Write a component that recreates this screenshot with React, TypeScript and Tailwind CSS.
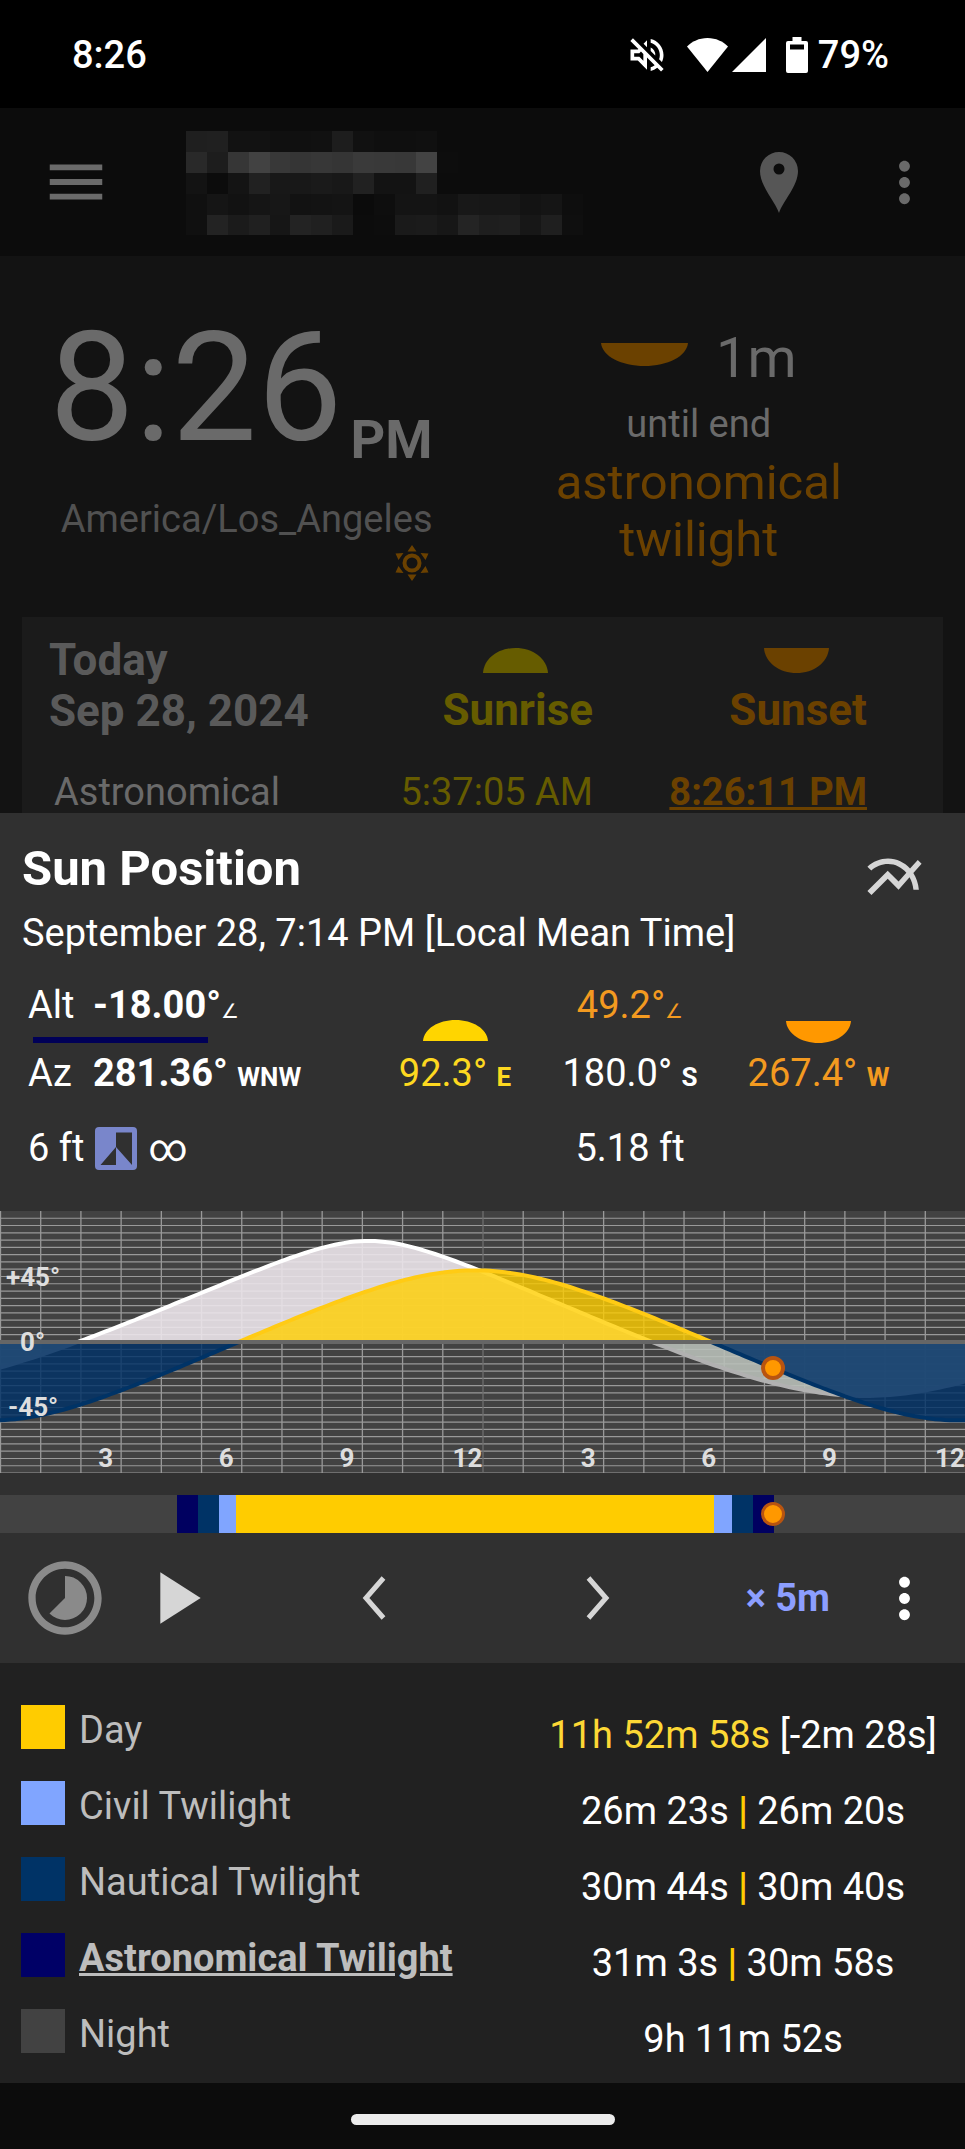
import { MdMenu, MdMoreVert, MdMultilineChart, MdPlayArrow, MdTimelapse } from "react-icons/md";

const redacted = [
  "1f 20 12 12 10 10 11 1d 11 0f 0f 10 0c 0c 0c 0c 0c 0c 0c",
  "29 1d 36 42 38 35 37 35 3a 39 38 43 0d 0c 0c 0c 0c 0c 0c",
  "13 0c 14 21 18 18 1a 18 21 13 13 20 0c 0c 0c 0c 0c 0c 0c",
  "10 15 12 15 17 12 13 14 0b 0e 14 14 12 18 17 17 13 15 0e",
  "10 23 1b 20 16 23 20 1a 0c 0d 1a 1b 17 24 1e 1f 17 1f 0f",
].map((row) => row.split(" "));

const dayParts = [
  { hours: 4.4, className: "bg-[#424242]" },
  { hours: 0.53, className: "bg-[#000060]" },
  { hours: 0.52, className: "bg-[#003366]" },
  { hours: 0.43, className: "bg-[#80a5ff]" },
  { hours: 11.89, className: "bg-[#ffcc00]" },
  { hours: 0.43, className: "bg-[#80a5ff]" },
  { hours: 0.52, className: "bg-[#003366]" },
  { hours: 0.52, className: "bg-[#000060]" },
  { hours: 4.76, className: "bg-[#424242]" },
];

const legend = [
  { name: "Day", swatch: "bg-[#ffcc00]", total: "11h 52m 58s", change: "[-2m 28s]" },
  { name: "Civil Twilight", swatch: "bg-[#80a5ff]", morning: "26m 23s", evening: "26m 20s" },
  { name: "Nautical Twilight", swatch: "bg-[#003366]", morning: "30m 44s", evening: "30m 40s" },
  { name: "Astronomical Twilight", swatch: "bg-[#000066]", morning: "31m 3s", evening: "30m 58s", current: true },
  { name: "Night", swatch: "bg-[#424242]", morning: "9h 11m 52s" },
];

const CHART_WIDTH = 965;
const HORIZON = 131;
const PX_PER_DEGREE = 1.456;
const HOUR = CHART_WIDTH / 24;
const LATITUDE = 38.5;
const rad = (deg: number) => (deg * Math.PI) / 180;

// altitude curve for a body that crosses the meridian at transitX
function curve(transitX: number, daySpan: number, declination: (x: number) => number) {
  const points: string[] = [];
  for (let x = 0; x <= CHART_WIDTH; x += 5) {
    const dec = rad(declination(x));
    const hourAngle = ((x - transitX) / daySpan) * 2 * Math.PI;
    const sinAlt =
      Math.sin(rad(LATITUDE)) * Math.sin(dec) +
      Math.cos(rad(LATITUDE)) * Math.cos(dec) * Math.cos(hourAngle);
    const altitude = (Math.asin(sinAlt) * 180) / Math.PI;
    points.push(`${x},${(HORIZON - altitude * PX_PER_DEGREE).toFixed(1)}`);
  }
  return points.join(" L");
}

const sunLine = `M${curve(475, CHART_WIDTH, () => -2.3)}`;
const moonLine = `M${curve(370, 985, (x) => 20.5 - x * 0.007)}`;
const closePath = (line: string) => `${line} L${CHART_WIDTH},${HORIZON} L0,${HORIZON} Z`;

function HalfSun({ setting, className }: { setting?: boolean; className: string }) {
  return (
    <svg viewBox="0 0 64 24" preserveAspectRatio="none" className={className} fill="currentColor" aria-hidden="true">
      <path d={setting ? "M0 0h64C63 14 49 24 32 24S1 14 0 0z" : "M0 24h64C63 10 49 0 32 0S1 10 0 24z"} />
    </svg>
  );
}

function StatusBar() {
  return (
    <div className="flex h-[108px] items-center bg-black pl-[72px] pr-[76px] pt-0.5 text-[38px] font-medium leading-[44px] text-white">
      <span>8:26</span>
      <svg viewBox="0 0 24 24" className="ml-auto size-11" fill="currentColor" aria-hidden="true">
        <path d="M4.34 2.93L2.93 4.34 7.29 8.7 7 9H3v6h4l5 5v-6.59l4.18 4.18c-.65.49-1.38.88-2.18 1.11v2.06a8.94 8.94 0 003.61-1.75l2.05 2.05 1.41-1.41L4.34 2.93zM10 15.17L7.83 13H5v-2h2.83l.88-.88L10 11.41v3.76zM19 12c0 .82-.15 1.61-.41 2.34l1.53 1.53c.56-1.17.88-2.48.88-3.87 0-4.28-2.99-7.86-7-8.77v2.06c2.89.86 5 3.54 5 6.71zm-7-8l-1.88 1.88L12 7.76V4zm4.5 8A4.5 4.5 0 0014 7.97v1.79l2.48 2.48c.01-.08.02-.16.02-.24z" />
      </svg>
      <svg viewBox="0 0 41 34" className="ml-[18px] h-[34px] w-[41px]" fill="currentColor" aria-hidden="true">
        <path d="M20.500 34L0 8.500C5 3.500 12 0 20.500 0S36 3.500 41 8.500z" />
      </svg>
      <svg viewBox="0 0 34 34" className="ml-1 size-[34px]" fill="currentColor" aria-hidden="true">
        <path d="M34 0v34H0z" />
      </svg>
      <svg viewBox="0 0 22 36" className="ml-5 h-9 w-[22px]" fill="currentColor" aria-hidden="true">
        <path fillRule="evenodd" d="M6.500 0h9v4H20a2 2 0 012 2v28a2 2 0 01-2 2H2a2 2 0 01-2-2V6a2 2 0 012-2h4.500zM4 7.500v5h14v-5z" />
      </svg>
      <span className="ml-2.5">79%</span>
    </div>
  );
}

function AppBar() {
  return (
    <header className="flex h-[148px] items-center bg-[#0c0c0c] pl-[41px] pr-7 text-[#6a6a6a]">
      <button aria-label="Open menu">
        <MdMenu className="size-[70px]" />
      </button>
      <svg viewBox="0 0 399 105" className="ml-[75px] mt-0.5 w-[397px]" shapeRendering="crispEdges" aria-hidden="true">
        {redacted.map((row, y) =>
          row.map((tone, x) => (
            <rect key={`${x}-${y}`} x={x * 21} y={y * 21} width="21" height="21" fill={`#${tone}${tone}${tone}`} />
          ))
        )}
      </svg>
      <button aria-label="Set location" className="ml-auto mr-[74px] text-[#565656]">
        <svg viewBox="0 0 38 61" className="h-[61px] w-[38px]" fill="currentColor" aria-hidden="true">
          <path fillRule="evenodd" d="M19 61C15 49 0 34 0 19a19 19 0 0138 0c0 15-15 30-19 42zM19 11.500a5.500 5.500 0 100 11 5.500 5.500 0 000-11z" />
        </svg>
      </button>
      <button aria-label="More options">
        <MdMoreVert className="size-[65px]" />
      </button>
    </header>
  );
}

function Clock() {
  return (
    <section className="grid grid-cols-2 pt-[52px] text-[#6a6a6a]">
      <div className="flex flex-col items-end pr-[50px]">
        <div className="flex items-end gap-2">
          <span className="text-[152px] leading-[160px]">8:26</span>
          <span className="text-[54px] font-bold leading-[56px]">PM</span>
        </div>
        <div className="mt-[29px] text-[38px] leading-[44px] text-[#515151]">America/Los_Angeles</div>
        <svg viewBox="0 0 34 36" className="mr-1 mt-1 h-9 w-[34px] text-[#6b4100]" fill="currentColor" aria-hidden="true">
          <circle cx="17" cy="18" r="7.500" fill="none" stroke="currentColor" strokeWidth="4" />
          <path d="M12.500 6.500l4.500-6.500 4.500 6.500zM12.500 29.500l4.500 6.500 4.500-6.500zM.5 8.500l8-.5-5 7zM33.500 8.500l-8-.5 5 7zM.5 27.500l8 .5-5-7zM33.500 27.500l-8 .5 5-7z" />
        </svg>
      </div>
      <div className="mt-[18px] flex flex-col items-center pr-[50px] text-center">
        <div className="flex items-center gap-7">
          <HalfSun setting className="mb-2 h-[23px] w-[87px] text-[#6b4100]" />
          <span className="text-[56px] leading-[64px]">1m</span>
        </div>
        <div className="mt-3 text-[38px] leading-[44px]">until end</div>
        <div className="mt-2 text-[49px] leading-[57px] text-[#6b4100]">
          astronomical
          <br />
          twilight
        </div>
      </div>
    </section>
  );
}

function TodayCard() {
  return (
    <section className="mx-[22px] mt-9 bg-[#1b1b1b] pt-[18px]">
      <table className="w-full table-fixed text-[#6a6a6a]">
        <thead>
          <tr className="text-[44px] font-bold leading-[51px]">
            <th className="w-[40%] pl-[27px] text-left text-[#5a5a5a]">
              Today
              <br />
              Sep 28, 2024
            </th>
            <th className="w-[22%] text-[#665c00]">
              <div className="flex flex-col items-end gap-3 pt-3">
                <HalfSun className="mr-[45px] h-[25px] w-[65px]" />
                Sunrise
              </div>
            </th>
            <th className="w-[38%] pr-[76px] text-[#6b4100]">
              <div className="flex flex-col items-end gap-3 pt-3">
                <HalfSun setting className="mr-[38px] h-[25px] w-[65px]" />
                Sunset
              </div>
            </th>
          </tr>
        </thead>
        <tbody>
          <tr className="text-[38px] leading-[42px]">
            <td className="pl-8 pt-[34px]">Astronomical</td>
            <td className="whitespace-nowrap pt-[34px] text-right text-[#665c00]">5:37:05 AM</td>
            <td className="pr-[76px] pt-[34px] text-right font-bold text-[#6b4100] underline">8:26:11 PM</td>
          </tr>
        </tbody>
      </table>
    </section>
  );
}

function PositionData() {
  return (
    <div className="mt-7 grid grid-cols-[347fr_160fr_190fr_187fr] grid-rows-[68px_75px_44px] pl-7 pr-[53px]">
      <div>
        <div className="flex h-11 items-baseline">
          <span className="w-[65px]">Alt</span>
          <span className="font-bold">-18.00°</span>
          <span className="text-[20px]">∠</span>
        </div>
        <div className="ml-[5px] mt-2.5 h-1.5 w-[175px] bg-[#000057]" />
      </div>
      <HalfSun className="mb-2.5 h-[21px] w-[65px] self-end justify-self-center text-[#ffd500]" />
      <div className="text-center text-[#f39a20]">
        49.2°<span className="text-[20px]">∠</span>
      </div>
      <HalfSun setting className="mb-2 h-[22px] w-[65px] self-end justify-self-center text-[#ff9800]" />

      <div className="flex items-baseline">
        <span className="w-[65px]">Az</span>
        <span className="font-bold">
          281.36° <span className="text-[26px]">WNW</span>
        </span>
      </div>
      <div className="text-center text-[#fdd820]">
        92.3° <span className="text-[26px] font-bold">E</span>
      </div>
      <div className="text-center">
        180.0° <span className="text-[26px] font-bold">S</span>
      </div>
      <div className="text-center text-[#f39a20]">
        267.4° <span className="text-[26px] font-bold">W</span>
      </div>

      <div className="flex items-center">
        6 ft
        <svg viewBox="0 0 42 43" className="mx-[11px] h-[43px] w-[42px]" aria-hidden="true">
          <rect width="42" height="43" rx="4" fill="#7986cb" />
          <path d="M21 5.500h16V38L21 20zM21 20v18H5.500z" fill="#303030" />
        </svg>
        ∞
      </div>
      <div className="col-start-3 text-center">5.18 ft</div>
    </div>
  );
}

function AltitudeChart() {
  const rows = Array.from({ length: 36 }, (_, i) => (i - 17) * 5);
  const hours = Array.from({ length: 24 }, (_, i) => i);
  const hourLabels = ["3", "6", "9", "12", "3", "6", "9", "12"];

  return (
    <svg viewBox="0 0 965 262" className="mt-[41px] block w-full" role="img" aria-label="Sun and moon altitude">
      <defs>
        <clipPath id="above">
          <rect width="965" height={HORIZON} />
        </clipPath>
        <clipPath id="below">
          <rect y={HORIZON} width="965" height={HORIZON} />
        </clipPath>
      </defs>
      <rect width="965" height="262" fill="#424242" />
      {rows.map((deg) => (
        <line key={deg} x2="965" y1={HORIZON + deg * PX_PER_DEGREE} y2={HORIZON + deg * PX_PER_DEGREE} stroke="#999" strokeWidth="1.200" />
      ))}
      {hours.map((h) => (
        <line key={h} x1={h * HOUR + 0.5} x2={h * HOUR + 0.5} y2="262" stroke={h === 12 ? "#6e6e6e" : "#999"} strokeWidth="1.300" />
      ))}
      <g clipPath="url(#above)">
        <path d={closePath(moonLine)} fill="#ece6eb" fillOpacity="0.9" />
        <path d={moonLine} fill="none" stroke="#fff" strokeWidth="4" />
        <path d={closePath(sunLine)} fill="#ffce00" fillOpacity="0.8" />
        <path d={sunLine} fill="none" stroke="#ffcb14" strokeWidth="4" />
      </g>
      <g clipPath="url(#below)">
        <path d={closePath(moonLine)} fill="#b9c0b9" fillOpacity="0.88" />
        <path d={moonLine} fill="none" stroke="#b1b1b1" strokeWidth="4" />
        <path d={closePath(sunLine)} fill="#003166" fillOpacity="0.82" />
        <path d={sunLine} fill="none" stroke="#003366" strokeWidth="4" />
      </g>
      <line x2="965" y1={HORIZON} y2={HORIZON} stroke="#666" strokeWidth="4" />
      <g fill="#dedede" fontSize="26" fontWeight="700">
        <text x="6" y="75">+45°</text>
        <text x="20" y="140">0°</text>
        <text x="8" y="205">-45°</text>
        {hourLabels.map((label, i) => (
          <text key={i} x={(i + 1) * 3 * HOUR - 15} y="256" textAnchor="middle">
            {label}
          </text>
        ))}
      </g>
      <circle cx="773" cy="157" r="10" fill="#ff9800" stroke="#b85410" strokeWidth="4" />
    </svg>
  );
}

function DayBar() {
  return (
    <div className="relative mt-[22px] flex h-[38px]">
      {dayParts.map((part, i) => (
        <div key={i} className={part.className} style={{ width: `${(part.hours / 24) * 100}%` }} />
      ))}
      <div className="absolute left-[80.1%] top-1/2 size-6 -translate-x-1/2 -translate-y-1/2 rounded-full border-[3px] border-[#b85410] bg-[#ff9800]" />
    </div>
  );
}

function Chevron({ next }: { next?: boolean }) {
  return (
    <svg viewBox="0 0 24 44" className="h-11 w-6" fill="none" stroke="currentColor" strokeWidth="5" aria-hidden="true">
      <path d={next ? "M2.500 2L20 22 2.500 42" : "M21.500 2L4 22l17.500 20"} />
    </svg>
  );
}

function Controls() {
  return (
    <div className="grid h-[130px] grid-cols-[130fr_89fr_309fr_139fr_205fr_65fr] items-center justify-items-center pr-7 text-[#d6d6d6]">
      <button aria-label="Reset to now" className="text-[#8a8a8a]">
        <MdTimelapse className="size-[88px]" />
      </button>
      <button aria-label="Play">
        <MdPlayArrow className="size-[88px]" />
      </button>
      <button aria-label="Previous">
        <Chevron />
      </button>
      <button aria-label="Next">
        <Chevron next />
      </button>
      <button className="justify-self-end pr-[42px] font-bold text-[#8c9eff]">× 5m</button>
      <button aria-label="More options" className="text-white">
        <MdMoreVert className="size-[65px]" />
      </button>
    </div>
  );
}

function Legend() {
  return (
    <div className="bg-[#212121] pb-3.5 pt-[26px]">
      <table className="w-full table-fixed">
        <tbody>
          {legend.map((row) => (
            <tr key={row.name} className="h-[76px]">
              <th scope="row" className="w-[54%] p-0 font-normal">
                <div className="flex items-center gap-3.5 pl-[21px]">
                  <span className={`size-11 ${row.swatch}`} />
                  <span className={`pt-1.5 text-[#bdbdbd] ${row.current ? "font-bold underline" : ""}`}>{row.name}</span>
                </div>
              </th>
              <td className="whitespace-nowrap p-0 pt-4 text-center">
                {row.total && (
                  <>
                    <span className="text-[#fdd835]">{row.total}</span> {row.change}
                  </>
                )}
                {row.morning}
                {row.evening && (
                  <>
                    {" "}
                    <span className="font-bold text-[#ffcc00]">|</span> {row.evening}
                  </>
                )}
              </td>
            </tr>
          ))}
        </tbody>
      </table>
    </div>
  );
}

export default function App() {
  return (
    <div className="flex min-h-screen flex-col bg-[#0c0c0c] font-[Roboto,sans-serif]">
      <StatusBar />
      <AppBar />
      <main className="bg-[#131313]">
        <Clock />
        <TodayCard />
      </main>
      <section className="bg-[#303030] text-[38px] leading-[44px] text-white">
        <div className="flex items-start justify-between pl-[22px] pr-[38px] pt-7">
          <div>
            <h1 className="text-[49px] font-bold leading-[56px]">Sun Position</h1>
            <p className="mt-3.5">September 28, 7:14 PM [Local Mean Time]</p>
          </div>
          <button aria-label="Show graph" className="mt-1 text-[#d6d6d6]">
            <MdMultilineChart className="size-[65px]" />
          </button>
        </div>
        <PositionData />
        <AltitudeChart />
        <DayBar />
        <Controls />
        <Legend />
      </section>
      <div className="flex justify-center pb-6 pt-[31px]">
        <div className="h-[11px] w-[264px] rounded-full bg-[#ececec]" />
      </div>
    </div>
  );
}
